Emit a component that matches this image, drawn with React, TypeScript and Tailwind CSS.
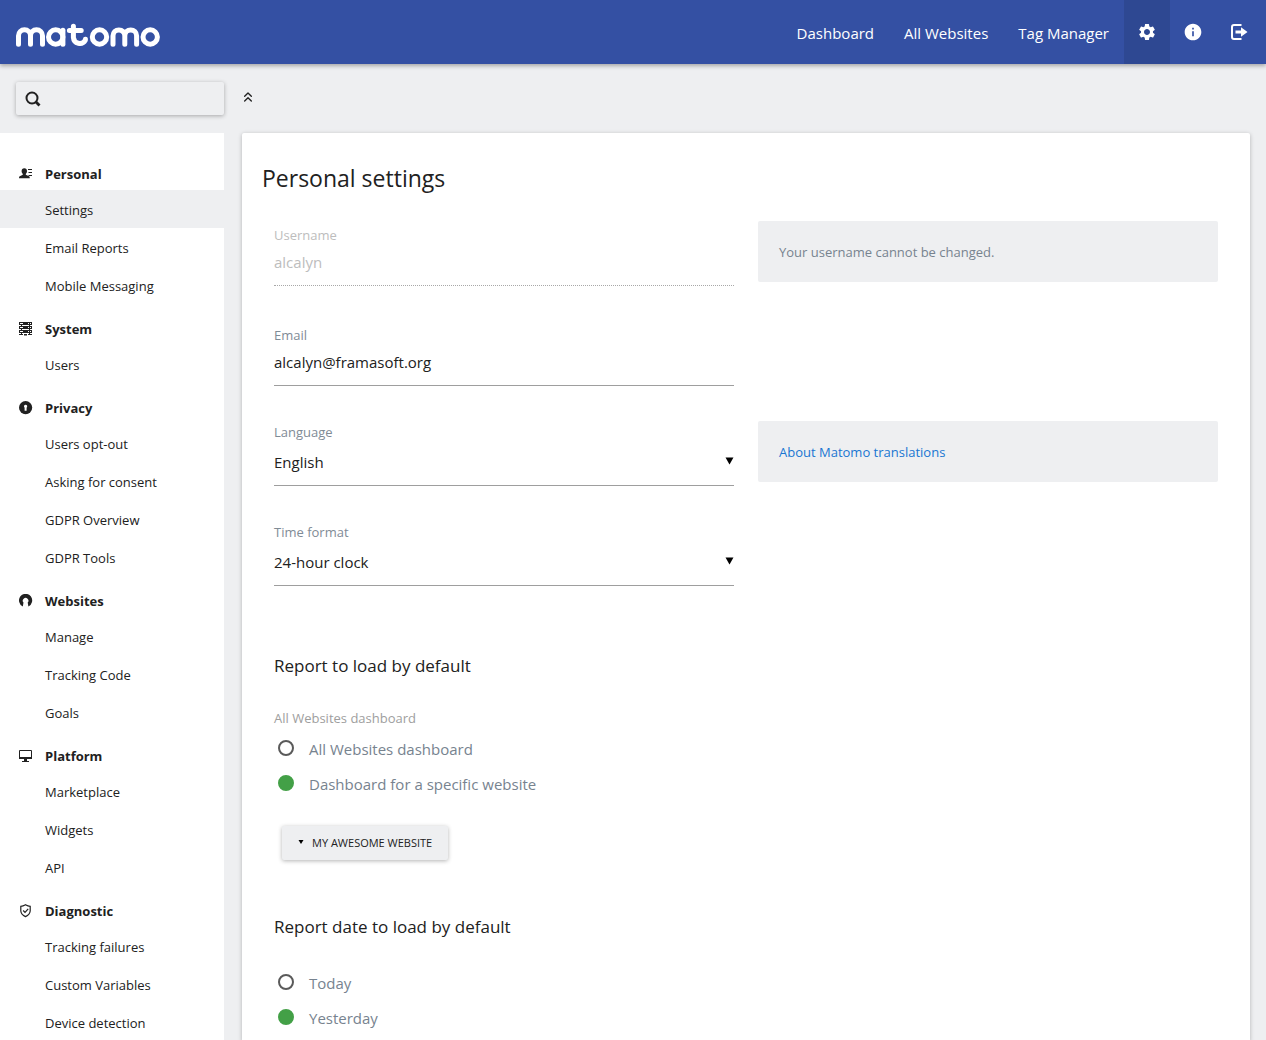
import React, { useState } from 'react';
import { ChevronsUp } from 'lucide-react';
import { MdSettings, MdInfo } from 'react-icons/md';

const Logo = () => (
  <svg width="176" height="64" viewBox="0 0 176 64" fill="none" stroke="#fff" strokeWidth="5" strokeLinecap="round" strokeLinejoin="round" role="img" aria-label="matomo">
    <path d="M18.500 44.300V35.800a6 6 0 0 1 12 0v8.500M30.500 44.300V35.800a6 6 0 0 1 12 0v8.500" />
    <circle cx="55.700" cy="37" r="7.200" />
    <path d="M62.900 30.200v14.100" />
    <path d="M73.400 26.300v11.200a6.400 6.400 0 0 0 11.900 2.700l.1-1M69.400 30.400h11.800" />
    <circle cx="99.500" cy="37" r="7.200" />
    <path d="M113 44.300V35.800a5.900 5.900 0 0 1 11.800 0v8.500M124.800 44.300V35.800a5.900 5.900 0 0 1 11.800 0v8.500" />
    <circle cx="150.200" cy="37" r="7.200" />
  </svg>
);

const SignOut = () => (
  <svg width="18" height="18" viewBox="0 0 18 18" fill="none" stroke="currentColor" aria-hidden="true">
    <path d="M11.500 2H4Q2 2 2 4v10q0 2 2 2h7.500" strokeWidth="2" />
    <path d="M5.500 7.500h5.500V4.200L17.500 9 11 13.800v-3.300H5.500z" fill="currentColor" stroke="none" />
  </svg>
);

const Person = () => (
  <svg width="14" height="14" viewBox="0 0 14 14" fill="currentColor" aria-hidden="true">
    <path d="M5.300 1.200c1.800 0 2.700 1.200 2.700 2.800 0 1.300-.5 2.300-1.200 2.900v.9l2.700 1.200c1 .4 1.300 1 1.300 2.300H0c0-1.300.3-1.900 1.300-2.300l2.500-1.200v-.9C3.100 6.300 2.600 5.300 2.600 4c0-1.600.9-2.800 2.700-2.800z" />
    <path d="M9 2h4v1H9zM9.500 5H13v1H9.500zM9.500 8H13v1H9.500z" />
  </svg>
);

const Server = () => (
  <svg width="14" height="14" viewBox="0 0 14 14" fill="currentColor" aria-hidden="true">
    {[0, 4, 8].map((y) => (
      <g key={y}>
        <rect x="0" y={y} width="13" height="3" />
        <path d={`M1 ${y + 1.500}h3M9 ${y + 1.500}h1M11 ${y + 1.500}h1`} stroke="#fff" strokeWidth="1" />
        <path d={`M2 ${y + 3}h1v1H2zM10 ${y + 3}h1v1h-1z`} />
      </g>
    ))}
    <path d="M0 12h4v1H0zM5 12h3v1.500H5zM9 12h4v1H9z" />
  </svg>
);

const Lock = () => (
  <svg width="14" height="14" viewBox="0 0 14 14" aria-hidden="true">
    <circle cx="6.600" cy="6.600" r="6.600" fill="currentColor" />
    <path d="M6.600 3.700a1.700 1.700 0 0 1 1 3V9.700H5.600V6.700a1.700 1.700 0 0 1 1-3z" fill="#fff" />
  </svg>
);

const Horseshoe = () => (
  <svg width="14" height="14" viewBox="0 0 14 14" aria-hidden="true">
    <path d="M3.800 12.400A6.600 6.600 0 1 1 9.400 12.400L8.700 8.600a2.800 2.800 0 1 0-4.200 0z" fill="currentColor" />
  </svg>
);

const Monitor = () => (
  <svg width="14" height="14" viewBox="0 0 14 14" aria-hidden="true">
    <path d="M.5 1.500h12v7H.5z" fill="none" stroke="currentColor" strokeWidth="1" />
    <path d="M0 8h13v2H0zM5 10h3v2h2v1H3v-1h2z" fill="currentColor" />
  </svg>
);

const Shield = () => (
  <svg width="14" height="14" viewBox="0 0 14 14" fill="none" stroke="currentColor" strokeWidth="1.200" aria-hidden="true">
    <path d="M6.500 .8Q9 2.200 11.200 2.300V7Q10.900 10.600 6.500 12.600 2.100 10.600 1.800 7V2.300Q4 2.200 6.500 .8z" />
    <path d="M4.200 6.500l1.800 1.800 3.200-3.500" />
  </svg>
);

const menu = [
  { title: 'Personal', Icon: Person, items: ['Settings', 'Email Reports', 'Mobile Messaging'] },
  { title: 'System', Icon: Server, items: ['Users'] },
  { title: 'Privacy', Icon: Lock, items: ['Users opt-out', 'Asking for consent', 'GDPR Overview', 'GDPR Tools'] },
  { title: 'Websites', Icon: Horseshoe, items: ['Manage', 'Tracking Code', 'Goals'] },
  { title: 'Platform', Icon: Monitor, items: ['Marketplace', 'Widgets', 'API'] },
  { title: 'Diagnostic', Icon: Shield, items: ['Tracking failures', 'Custom Variables', 'Device detection'] },
];

function TopBar() {
  return (
    <header className="relative flex h-16 items-center justify-between bg-[#3450a3] pr-1 text-white shadow-[0_2px_4px_rgba(0,0,0,0.3)]">
      <a href="#home"><Logo /></a>
      <nav className="flex h-full items-center text-[15px]">
        {['Dashboard', 'All Websites', 'Tag Manager'].map((t) => (
          <a key={t} href="#nav" className="px-[15px] pt-0.5">{t}</a>
        ))}
        <a href="#settings" aria-label="Settings" className="flex h-full w-[46px] items-center justify-center bg-[#2e4892]"><MdSettings size={20} /></a>
        <a href="#help" aria-label="Help" className="flex h-full w-[46px] items-center justify-center"><MdInfo size={20} /></a>
        <a href="#logout" aria-label="Sign out" className="flex h-full w-[46px] items-center justify-center"><SignOut /></a>
      </nav>
    </header>
  );
}

function Sidebar() {
  return (
    <nav className="flex-1 bg-white pt-4 text-[13px]">
      {menu.map(({ title, Icon, items }) => (
        <section key={title}>
          <h2 className="flex h-[41px] items-center gap-3 pt-[9px] pl-[19px] font-bold">
            <Icon />
            <span className="pt-0.5">{title}</span>
          </h2>
          <ul>
            {items.map((it) => (
              <li key={it}>
                <a href="#item" className={`flex h-[38px] items-center pt-1 pl-[45px] ${it === 'Settings' ? 'bg-[#eeeff1]' : ''}`}>{it}</a>
              </li>
            ))}
          </ul>
        </section>
      ))}
    </nav>
  );
}

function SelectField({ id, label, value }: { id: string; label: string; value: string }) {
  return (
    <div className="flex flex-col">
      <label htmlFor={id} className="text-[13px] leading-[22px] text-[#7f8b96]">{label}</label>
      <div className="relative mt-[3px]">
        <select id={id} className="h-10 w-full appearance-none border-b border-[#9e9e9e] pb-1.5 text-[15px] outline-none">
          <option>{value}</option>
        </select>
        <svg width="9" height="8" viewBox="0 0 9 8" className="pointer-events-none absolute top-[11px] right-0" aria-hidden="true">
          <path d="M.5.500h8L4.500 7.500z" />
        </svg>
      </div>
    </div>
  );
}

function RadioList({ name, options }: { name: string; options: string[] }) {
  const [picked, setPicked] = useState(options[1]);
  return (
    <div>
      {options.map((o) => (
        <label key={o} className="flex h-[35px] items-center gap-[15px] pl-1 text-[15px] text-[#77838f]">
          <input
            type="radio"
            name={name}
            checked={picked === o}
            onChange={() => setPicked(o)}
            className="mb-[3px] size-4 appearance-none rounded-full border-2 border-[#5a5a5a] checked:border-[#43a047] checked:bg-[#43a047]"
          />
          {o}
        </label>
      ))}
    </div>
  );
}

const field = 'mt-px h-10 w-full border-b pb-2 text-[15px] outline-none';

export default function App() {
  return (
    <div className="flex min-h-screen flex-col bg-[#eeeff1] font-['Open_Sans','Noto_Sans',sans-serif] text-[#212121]">
      <TopBar />
      <div className="flex flex-1 gap-[18px] pt-[18px] pr-4">
        <div className="flex w-56 shrink-0 flex-col">
          <label className="mb-[18px] ml-4 flex h-[33px] items-center rounded-[2px] pl-[9px] shadow-[0_1px_4px_rgba(0,0,0,0.3)]">
            <svg width="16" height="16" viewBox="0 0 16 16" fill="none" stroke="currentColor" aria-hidden="true">
              <circle cx="7" cy="7" r="5.500" strokeWidth="2" />
              <path d="M10.500 10.500l4 4" strokeWidth="2.800" />
            </svg>
            <input type="search" aria-label="Search" className="min-w-0 flex-1 px-2 text-[13px] outline-none" />
          </label>
          <Sidebar />
        </div>
        <main className="flex min-w-0 flex-1 flex-col">
          <button aria-label="Collapse" className="mb-7 flex h-[23px] w-[11px] items-end justify-center"><ChevronsUp size={16} strokeWidth={2} className="shrink-0" /></button>
          <div className="flex-1 rounded-t-[2px] bg-white px-5 pt-[29px] shadow-[0_1px_4px_rgba(0,0,0,0.25)]">
            <h1 className="mb-[27px] text-[23px] leading-8">Personal settings</h1>
            <form className="px-3">
              <div className="grid grid-cols-2 gap-x-6 gap-y-[35px]">
                <div className="flex flex-col pt-1">
                  <label htmlFor="user" className="text-[13px] leading-5 text-[#bdbdbd]">Username</label>
                  <input id="user" disabled defaultValue="alcalyn" className={field + ' border-dotted border-[#a8a8a8] text-[#bdbdbd]'} />
                </div>
                <p className="self-start rounded-[2px] bg-[#eeeff1] px-[21px] pt-[21px] pb-[19px] text-[13px] leading-[21px] text-[#77838f]">Your username cannot be changed.</p>
                <div className="flex flex-col pt-1">
                  <label htmlFor="email" className="text-[13px] leading-5 text-[#7f8b96]">Email</label>
                  <input id="email" type="email" defaultValue="alcalyn@framasoft.org" className={field + ' border-[#9e9e9e]'} />
                </div>
                <div />
                <SelectField id="lang" label="Language" value="English" />
                <p className="self-start rounded-[2px] bg-[#eeeff1] px-[21px] pt-[21px] pb-[19px] text-[13px] leading-[21px]"><a href="#translations" className="text-[#1976d2]">About Matomo translations</a></p>
                <SelectField id="time" label="Time format" value="24-hour clock" />
              </div>
              <h2 className="mt-[68px] text-[17px] leading-6">Report to load by default</h2>
              <p className="mt-[30px] mb-1 text-[13px] leading-5 text-[#9e9e9e]">All Websites dashboard</p>
              <RadioList name="report" options={['All Websites dashboard', 'Dashboard for a specific website']} />
              <button type="button" className="mt-6 ml-2 flex h-[34px] items-center gap-2 rounded-[2px] bg-[#eeeff1] px-4 text-[11px] uppercase shadow-[0_1px_4px_rgba(0,0,0,0.3)]">
                <svg width="6" height="6" viewBox="0 0 6 6" aria-hidden="true"><path d="M.5 0h5L3 4z" /></svg>
                My awesome website
              </button>
              <h2 className="mt-[55px] mb-[27px] text-[17px] leading-6">Report date to load by default</h2>
              <RadioList name="date" options={['Today', 'Yesterday']} />
            </form>
          </div>
        </main>
      </div>
    </div>
  );
}
